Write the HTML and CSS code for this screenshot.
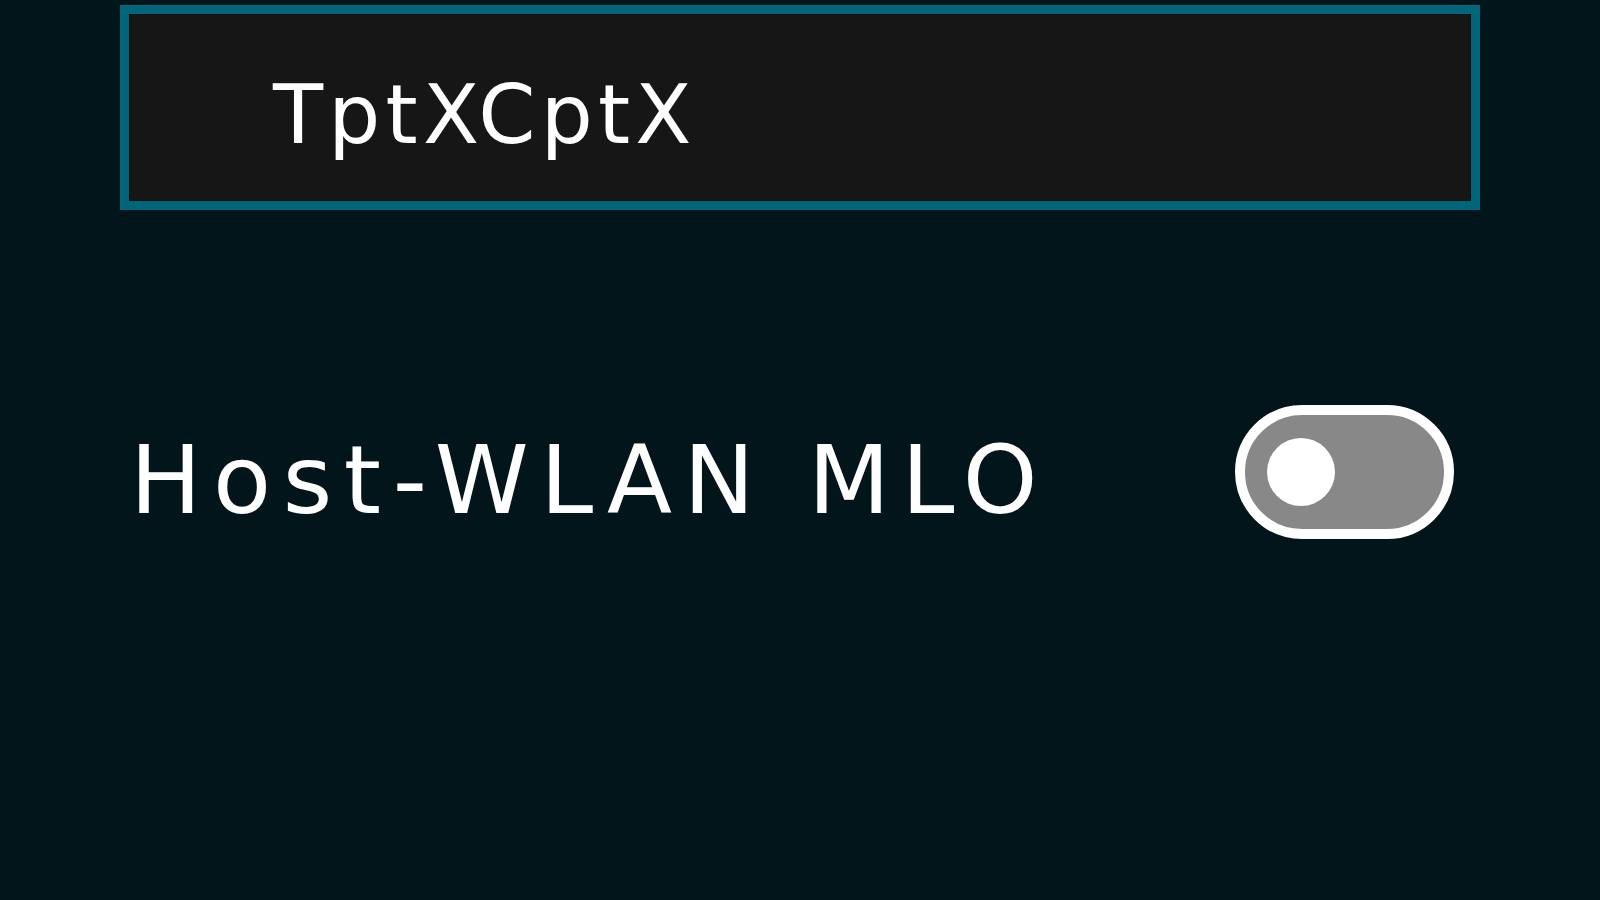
FILE: index.html
```html
<!DOCTYPE html>
<html lang="en">
<head>
  <meta charset="UTF-8">
  <title>Host-WLAN MLO</title>
  <meta name="viewport" content="width=device-width, initial-scale=1.0">
  <link rel="stylesheet" href="styles.css">
</head>
<body>

  <div class="page">
    <div class="field">
      <span class="field-text">TptXCptX</span>
    </div>

    <div class="row">
      <span class="row-label">Host-WLAN MLO</span>
      <div class="toggle">
        <div class="knob"></div>
      </div>
    </div>
  </div>

</body>
</html>
```

FILE: styles.css
```css
:root {
  --bg-color: #01151b;
  --field-bg: #161616;
  --field-border: #02667a;
  --text-color: #ffffff;
  --toggle-bg: #888888;
}

* {
  box-sizing: border-box;
}

body {
  margin: 0;
  background-color: var(--bg-color);
  color: var(--text-color);
  font-family: 'DejaVu Sans', 'Liberation Sans', sans-serif;
  height: 100vh;
  overflow: hidden;
}

.page {
  padding: 5px 120px 0 120px;
}

.field {
  height: 205px;
  border: 9px solid var(--field-border);
  background: var(--field-bg);
  box-shadow: inset 0 0 0 1px rgba(0, 0, 0, 0.35);
  display: flex;
  align-items: center;
  padding: 14px 0 0 144px;
}

.field-text {
  font-size: 82px;
  line-height: 1;
  letter-spacing: 5.2px;
}

.row {
  margin-top: 195px;
  height: 134px;
  display: flex;
  align-items: center;
  justify-content: space-between;
  padding: 0 26px 0 10px;
}

.row-label {
  font-size: 95px;
  line-height: 1;
  letter-spacing: 11.6px;
  padding-top: 16px;
}

.toggle {
  width: 219px;
  height: 134px;
  border: 10px solid var(--text-color);
  border-radius: 67px;
  background: var(--toggle-bg);
  display: flex;
  align-items: center;
  padding-left: 22px;
}

.knob {
  width: 68px;
  height: 68px;
  border-radius: 50%;
  background: var(--text-color);
}
```
